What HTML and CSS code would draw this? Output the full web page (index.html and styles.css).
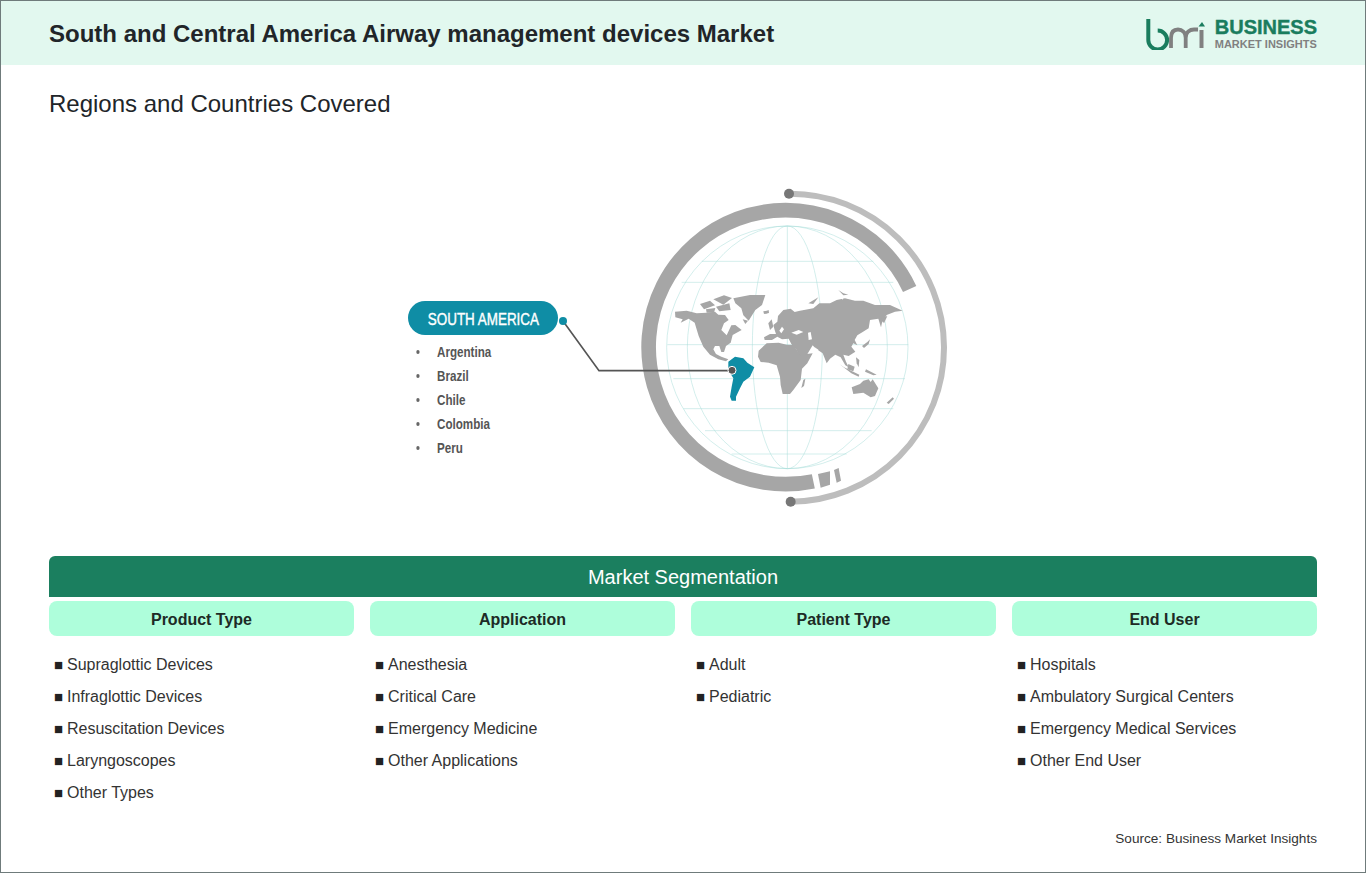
FILE: index.html
```html
<!DOCTYPE html>
<html lang="en">
<head>
    <meta charset="UTF-8">
    <meta name="viewport" content="width=device-width, initial-scale=1.0">
    <title>South and Central America Airway management devices Market</title>
    <link rel="stylesheet" href="styles.css">
</head>
<body>
    <div class="frame">
        <header class="header">
            <h1 class="title">South and Central America Airway management devices Market</h1>
            <div class="logo">
                <svg class="logo-mark" viewBox="0 0 60 31" width="60" height="31">
                    <path d="M2.300 0V21A9.400 9.400 0 1 0 11.700 11.600" fill="none" stroke="#1a7d5e" stroke-width="4"/>
                    <path d="M25 29V19C25 13 28 10.500 32 10.500C36 10.500 39.700 13 39.700 19V29M39.700 19C39.700 13 44 10.500 48 10.500H52" fill="none" stroke="#808080" stroke-width="3.800"/>
                    <path d="M55.500 11V29" fill="none" stroke="#808080" stroke-width="4"/>
                    <path d="M52.500 7.500L56 3L59 7.500Z" fill="#1a7d5e"/>
                </svg>
                <div class="logo-text">
                    <div class="logo-top">BUSINESS</div>
                    <div class="logo-bottom">MARKET INSIGHTS</div>
                </div>
            </div>
        </header>

        <h2 class="subtitle">Regions and Countries Covered</h2>

        <div class="map-area">
            <div class="region">
                <div class="region-pill"><span class="region-name">SOUTH AMERICA</span></div>
                <ul class="region-list">
                    <li>Argentina</li>
                    <li>Brazil</li>
                    <li>Chile</li>
                    <li>Colombia</li>
                    <li>Peru</li>
                </ul>
            </div>
            <!-- drawing coords: 3 units = 1px -->
            <svg class="globe" viewBox="0 0 990 1020" width="330" height="340">
                <!-- graticule -->
                <g fill="none" stroke="#a6dcd9" stroke-width="1.500">
                    <ellipse cx="472" cy="502" rx="362" ry="364"/>
                    <ellipse cx="472" cy="502" rx="300" ry="364"/>
                    <ellipse cx="472" cy="502" rx="105" ry="364"/>
                    <path d="M472 138V866"/>
                    <path d="M215 244H730M155 307H790M112 494H835M130 596H825M160 686H790M225 752H725M305 822H650"/>
                </g>

                <!-- rings -->
                <path d="M839 327A411 411 0 1 0 550 904" fill="none" stroke="#a6a6a6" stroke-width="44"/>
                <path d="M564 882L600 874L600 914L572 923Z" fill="#a6a6a6"/>
                <path d="M612 870L626 864L633 902L620 908Z" fill="#a6a6a6"/>
                <path d="M478 41A462 462 0 0 1 482 965" fill="none" stroke="#bdbdbd" stroke-width="18"/>
                <circle cx="477" cy="41" r="15" fill="#777"/>
                <circle cx="482" cy="965" r="15" fill="#777"/>

                <!-- Americas, Greenland -->
                <g fill="#a6a6a6" transform="translate(90 300)">
                    <path d="M45 95L80 92L110 100L140 98L165 95L175 104L195 105L206 120L192 130L184 150L200 166L214 136L226 135L245 150L230 158L218 165L212 188L198 198L192 216L184 216L178 198L165 198L160 208L168 222L184 230L205 238L198 244L175 238L150 224L130 200L116 168L104 128L86 116L62 128L68 118L46 112Z"/>
                    <path d="M220 55L270 45L316 45L306 75L286 90L266 122L250 106L244 85L226 70Z"/>
                    <path d="M120 72L150 62L165 76L132 88Z"/>
                    <path d="M160 58L192 46L216 54L190 74Z"/>
                    <path d="M168 80L208 70L212 90L178 94Z"/>
                    <path d="M138 88L166 84L162 98L140 98Z"/>
                    <path d="M248 118L264 122L256 132Z"/>
                    <path d="M310 94L322 92L322 100L312 102Z"/>
                </g>
                <g fill="#a6a6a6" transform="translate(450 300)">
                    <!-- Eurasia -->
                    <path d="M-48 172L-30 162L-12 162L-16 150L-20 135L-8 125L-6 108L10 90L32 86L44 96L60 92L100 85L118 70L150 70L170 60L195 55L225 62L250 62L285 75L330 75L368 92L345 95L320 105L306 128L303 142L295 116L270 120L266 145L248 156L232 166L224 180L232 196L220 190L214 200L226 215L206 228L190 224L198 245L206 262L196 256L182 232L166 224L150 236L140 250L128 220L106 205L98 196L80 226L62 236L50 210L34 192L26 176L6 178L-8 170L-24 180L-46 180Z"/>
                    <path d="M-35 130L-25 118L-20 140L-30 150Z"/>
                    <path d="M-46 95L-34 90L-33 99L-44 101Z"/>
                    <path d="M175 30L190 40L205 44L190 46Z"/>
                    <path d="M85 70L115 52L100 72Z"/>
                    <path d="M302 115L322 108L312 130Z"/>
                    <path d="M246 198L262 186L270 178L266 192L252 204Z"/>
                    <!-- Africa -->
                    <path d="M-64 212L-40 190L-4 188L20 194L40 195L62 226L80 222L98 220L82 250L66 266L62 300L40 330L30 342L8 342L2 315L0 290L-10 256L-34 248L-58 246L-66 230Z"/>
                    <path d="M70 300L76 296L72 318L64 324Z"/>
                    <!-- Indonesia, Philippines -->
                    <path d="M178 252L192 262L238 284L236 290L214 280Z"/>
                    <path d="M205 252L224 260L220 274L202 268Z"/>
                    <path d="M258 268L290 284L280 286L255 275Z"/>
                    <path d="M228 232L238 240L236 262L230 250Z"/>
                    <!-- Australia, NZ -->
                    <path d="M215 322L240 312L250 302L266 298L272 306L278 298L295 325L285 348L272 352L250 338L220 342Z"/>
                    <path d="M320 368L338 352L342 356L326 372Z"/>
                </g>
                <!-- seas -->
                <g fill="#fff">
                    <path d="M484 458L506 450L520 456L500 464Z"/>
                    <path d="M534 458L542 456L546 478L536 480Z"/>
                    <path d="M552 500L566 510L560 514Z"/>
                    <path d="M632 350L640 348L638 360Z"/>
                    <path d="M448 452L456 440L462 448L454 460Z"/>
                </g>
                <path d="M295 545L315 530L340 535L352 548L373 562L360 590L340 605L330 625L318 650L318 662L305 662L300 650L305 620L310 595L295 570Z" fill="#0f8da5"/>

                <!-- leader -->
                <path d="M-201 423L-93 572H307" fill="none" stroke="#555" stroke-width="5"/>
                <circle cx="-201" cy="423" r="12" fill="#0f8da5"/>
                <circle cx="306" cy="571" r="12" fill="#555" stroke="#fff" stroke-width="3"/>
            </svg>
        </div>

        <section class="segments">
            <div class="segments-bar">Market Segmentation</div>
            <div class="segments-grid">
                <div class="segment">
                    <div class="segment-head">Product Type</div>
                    <ul class="segment-list">
                        <li>Supraglottic Devices</li>
                        <li>Infraglottic Devices</li>
                        <li>Resuscitation Devices</li>
                        <li>Laryngoscopes</li>
                        <li>Other Types</li>
                    </ul>
                </div>
                <div class="segment">
                    <div class="segment-head">Application</div>
                    <ul class="segment-list">
                        <li>Anesthesia</li>
                        <li>Critical Care</li>
                        <li>Emergency Medicine</li>
                        <li>Other Applications</li>
                    </ul>
                </div>
                <div class="segment">
                    <div class="segment-head">Patient Type</div>
                    <ul class="segment-list">
                        <li>Adult</li>
                        <li>Pediatric</li>
                    </ul>
                </div>
                <div class="segment">
                    <div class="segment-head">End User</div>
                    <ul class="segment-list">
                        <li>Hospitals</li>
                        <li>Ambulatory Surgical Centers</li>
                        <li>Emergency Medical Services</li>
                        <li>Other End User</li>
                    </ul>
                </div>
            </div>
        </section>

        <div class="source">Source: Business Market Insights</div>
    </div>
</body>
</html>
```

FILE: styles.css
```css
body {
    margin: 0;
    background-color: #fff;
    color: #222;
    font-family: "Liberation Sans", Arial, sans-serif;
}
.frame {
    box-sizing: border-box;
    height: 873px;
    border: 1px solid #6f7b7b;
    overflow: hidden;
}
.header {
    box-sizing: border-box;
    height: 64px;
    padding: 2px 48px 0;
    background-color: #e2f8ef;
    display: flex;
    align-items: center;
    justify-content: space-between;
}
.title {
    margin: 0;
    font-size: 24px;
    font-weight: bold;
    color: #212529;
}
.logo {
    display: flex;
    align-items: center;
    gap: 9px;
}
.logo-mark {
    display: block;
}
.logo-top {
    font-size: 20px;
    line-height: 21px;
    font-weight: bold;
    color: #1a7d5e;
    -webkit-text-stroke: .4px #1a7d5e;
}
.logo-bottom {
    font-size: 11px;
    line-height: 13px;
    font-weight: bold;
    color: #808080;
}
.subtitle {
    margin: 25px 48px 0;
    font-size: 24px;
    line-height: 28px;
    font-weight: normal;
    color: #212529;
}

/* free canvas for the globe diagram */
.map-area {
    position: relative;
    height: 438px;
}
.region {
    position: absolute;
    left: 407px;
    top: 183px;
    width: 150px;
}
.region-pill {
    height: 34px;
    border-radius: 17px;
    background-color: #0f8da5;
    color: #fff;
    font-size: 17px;
    line-height: 37px;
    text-align: center;
    white-space: nowrap;
}
/* no condensed font here, so squeeze it */
.region-name {
    display: inline-block;
    transform: scaleX(.79);
    -webkit-text-stroke: .4px #fff;
}
.region-list {
    margin: 5px 0 0;
    padding: 0;
    list-style: none;
    transform: scaleX(.83);
    transform-origin: left;
}
.region-list li {
    position: relative;
    padding-left: 35px;
    height: 24px;
    font-size: 14px;
    font-weight: bold;
    line-height: 24px;
    color: #555;
}
.region-list li::before {
    content: "";
    position: absolute;
    left: 10px;
    top: 10px;
    width: 4px;
    height: 4px;
    border-radius: 50%;
    background-color: #666;
}
.globe {
    position: absolute;
    left: 629px;
    top: 62px;
    overflow: visible;
}

.segments {
    margin: 0 48px;
}
.segments-bar {
    height: 41px;
    border-radius: 6px 6px 0 0;
    background-color: #1b7f5f;
    color: #fff;
    font-size: 20px;
    line-height: 43px;
    text-align: center;
}
.segments-grid {
    margin-top: 4px;
    display: grid;
    grid-template-columns: repeat(4, 1fr);
    gap: 16px;
}
.segment-head {
    height: 35px;
    border-radius: 8px;
    background-color: #aefedb;
    font-size: 16px;
    font-weight: bold;
    line-height: 38px;
    text-align: center;
    color: #1d2b26;
}
.segment-list {
    margin: 13px 0 0;
    padding: 0 0 0 5px;
    list-style: none;
}
.segment-list li {
    height: 32px;
    font-size: 16px;
    line-height: 32px;
    color: #333;
}
.segment-list li::before {
    content: "■";
    display: inline-block;
    width: 13px;
    font-size: 15px;
    color: #222;
}
.source {
    margin: 21px 48px 0;
    font-size: 13.600px;
    line-height: 18px;
    text-align: right;
    color: #333;
}
```
